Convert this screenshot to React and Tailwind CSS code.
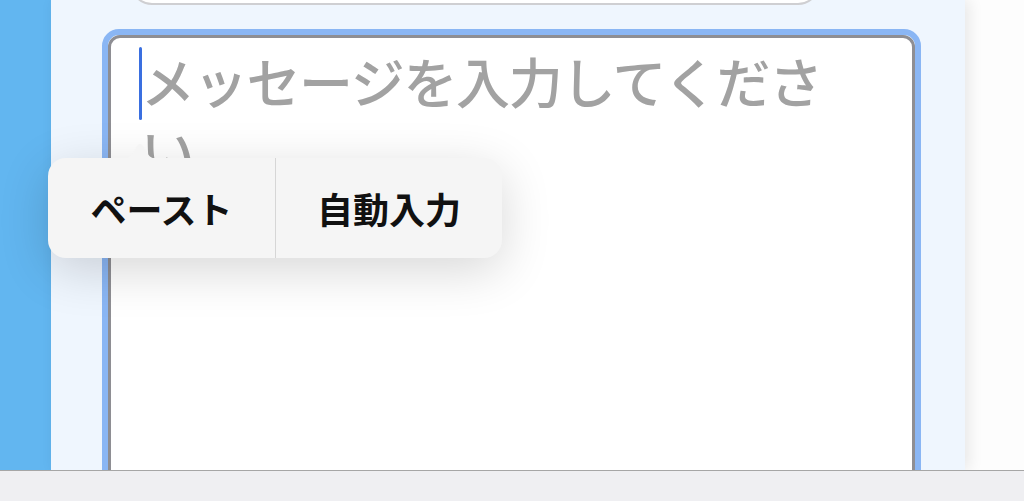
import React from "react";

const jp = { fontFamily: '"Noto Sans CJK JP", "Noto Sans", sans-serif' };

function EditMenu() {
  return (
    <div className="absolute left-[48px] top-[143px] z-10" style={jp}>
      <svg width="40" height="16" viewBox="0 0 40 16" className="ml-[72px] block -mb-px">
        <path d="M0 16 C 8 16 10 14 13 10 L 17 3 Q 20 -1 23 3 L 27 10 C 30 14 32 16 40 16 Z" fill="#f5f5f5" />
      </svg>
      <div className="flex h-[100px] w-[454px] items-center rounded-[18px] bg-[#f5f5f5] shadow-[0_12px_50px_rgba(0,0,0,0.16)]">
        <div className="flex h-full w-[227px] items-center justify-center text-[36px] font-semibold leading-none text-[#111]">
          ペースト
        </div>
        <div className="h-full w-px bg-[#d6d6d6]" />
        <div className="flex h-full flex-1 items-center justify-center text-[36px] font-semibold leading-none text-[#111]">
          自動入力
        </div>
      </div>
    </div>
  );
}

function MessageBox() {
  return (
    <div className="ml-[51px] mt-[24px] h-[460px] w-[819px] rounded-[17px] border-[6px] border-[#8ab6f4]">
      <div className="relative h-full rounded-[12px] border-[3px] border-[#8e8e93] bg-white">
        <span className="absolute left-[28px] top-[9px] h-[73px] w-[3px] rounded-full bg-[#3a6fe0]" />
        <div className="w-[725px] pl-[30px] pt-[8px] text-[54px] font-medium leading-[70px] tracking-[-1.3px] text-[#a2a2a2]" style={jp}>
          メッセージを入力してください
        </div>
      </div>
    </div>
  );
}

export default function App() {
  return (
    <div className="relative flex h-[501px] w-[1024px] flex-col overflow-hidden bg-[#fdfdfd]">
      <div className="flex flex-1 overflow-hidden">
        <div className="w-[51px] bg-[#62b6f0]" />
        <div className="relative z-[1] w-[914px] bg-[#eff6fe] shadow-[4px_0_14px_rgba(0,0,0,0.09)]">
          <div className="-mt-[40px] ml-[79px] h-[45px] w-[690px] rounded-[22px] border-2 border-[#cfcfd2] bg-white" />
          <MessageBox />
        </div>
        <div className="flex-1" />
      </div>
      <div className="relative z-[2] h-[31px] border-t border-[#a6a6a6] bg-[#efeff2]" />
      <EditMenu />
    </div>
  );
}
